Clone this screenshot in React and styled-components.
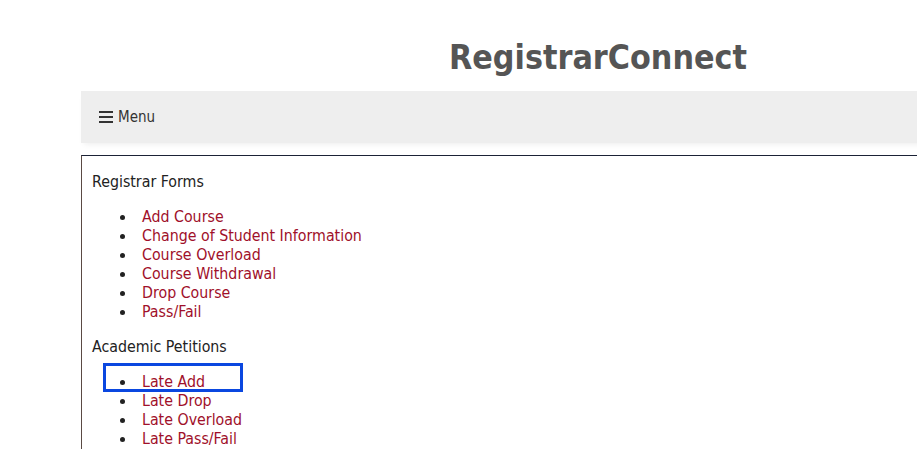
import React from 'react'
import styled, { createGlobalStyle } from 'styled-components'

const GlobalStyle = createGlobalStyle`
  body {
    margin: 0;
    background: #fff;
    font-family: "DejaVu Sans Condensed", "DejaVu Sans", sans-serif;
    overflow: hidden;
  }
`

const forms = [
  'Add Course',
  'Change of Student Information',
  'Course Overload',
  'Course Withdrawal',
  'Drop Course',
  'Pass/Fail',
]

const petitions = ['Late Add', 'Late Drop', 'Late Overload', 'Late Pass/Fail']

function App() {
  return (
    <Page>
      <GlobalStyle />
      <Title>RegistrarConnect</Title>
      <NavBar>
        <MenuButton>
          <Burger viewBox="0 0 14 14">
            <rect x="0" y="1" width="14" height="2" />
            <rect x="0" y="6" width="14" height="2" />
            <rect x="0" y="11" width="14" height="2" />
          </Burger>
          Menu
        </MenuButton>
      </NavBar>
      <Content>
        <Heading>Registrar Forms</Heading>
        <LinkList>
          {forms.map((f) => (
            <Item key={f}>
              <Link href="#">{f}</Link>
            </Item>
          ))}
        </LinkList>
        <Heading>Academic Petitions</Heading>
        <LinkList>
          {petitions.map((f, i) => (
            <Item key={f} $focused={i === 0}>
              <Link href="#">{f}</Link>
            </Item>
          ))}
        </LinkList>
      </Content>
    </Page>
  )
}

export default App

const Page = styled.div`
  margin-left: 81px;
  width: 1034px;
`
const Title = styled.h1`
  margin: 0;
  padding-top: 36px;
  height: 55px;
  text-align: center;
  font-size: 33.7px;
  font-weight: bold;
  color: #555;
  line-height: 44px;
`
const NavBar = styled.div`
  height: 52px;
  background: #eeeeee;
  display: flex;
  align-items: center;
  padding-left: 18px;
  box-shadow: 0 4px 6px -3px rgba(0, 0, 0, 0.08);
`
const MenuButton = styled.div`
  display: flex;
  align-items: center;
  gap: 5px;
  font-size: 15px;
  color: #333;
`
const Burger = styled.svg`
  width: 14px;
  height: 14px;
  fill: #333;
`
const Content = styled.div`
  margin-top: 12px;
  border-top: 1px solid #1b2236;
  border-left: 1px solid #5a4a44;
  padding: 16px 10px 10px;
  color: #222;
  font-size: 15.8px;
`
const Heading = styled.p`
  margin: 0 0 16px;
  line-height: 19px;
`
const LinkList = styled.ul`
  margin: 0 0 16px;
  padding-left: 50px;
  line-height: 19px;
  list-style: none;
`
const Item = styled.li`
  position: relative;
  &::before {
    content: '';
    position: absolute;
    left: -22px;
    top: 8px;
    width: 5px;
    height: 5px;
    border-radius: 50%;
    background: #222;
  }
  &::after {
    content: '';
    display: ${(p) => (p.$focused ? 'block' : 'none')};
    position: absolute;
    left: -39px;
    top: -9px;
    width: 134px;
    height: 23px;
    border: 3px solid #0a47e0;
  }
`
const Link = styled.a`
  color: #a0102a;
  text-decoration: none;
`
